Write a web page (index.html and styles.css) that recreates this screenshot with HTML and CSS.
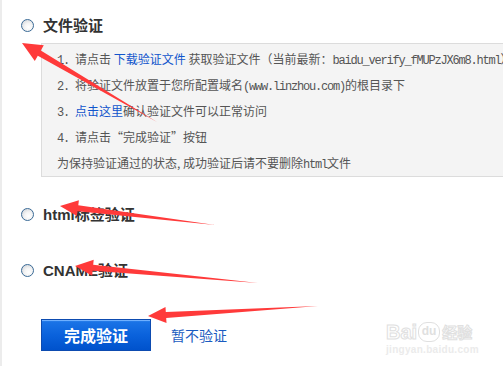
FILE: index.html
```html
<!DOCTYPE html>
<html lang="zh-CN">
<head>
<meta charset="utf-8">
<title>验证方式</title>
<link rel="stylesheet" href="styles.css">
</head>
<body>
<div class="page">
  <div class="option first">
    <span class="radio"></span>
    <span class="label">文件验证</span>
  </div>
  <div class="box">
    <p class="line"><span class="mono">1. </span>请点击 <a class="link">下载验证文件</a> 获取验证文件（当前最新：<span class="mono">baidu_verify_fMUPzJX6m8.html</span>）</p>
    <p class="line"><span class="mono">2. </span>将验证文件放置于您所配置域名<span class="mono">(www.linzhou.com)</span>的根目录下</p>
    <p class="line"><span class="mono">3. </span><a class="link">点击这里</a>确认验证文件可以正常访问</p>
    <p class="line"><span class="mono">4. </span>请点击<span class="q">“</span>完成验证<span class="q">”</span>按钮</p>
    <p class="line">为保持验证通过的状态, 成功验证后请不要删除<span class="mono">html</span>文件</p>
  </div>
  <div class="option second">
    <span class="radio"></span>
    <span class="label"><span class="latin">html</span>标签验证</span>
  </div>
  <div class="option third">
    <span class="radio"></span>
    <span class="label"><span class="latin">CNAME</span>验证</span>
  </div>
  <div class="actions">
    <button class="btn">完成验证</button>
    <a class="skip">暂不验证</a>
  </div>
</div>

<div class="watermark">
  <div class="wm-top"><span class="wm-bai">Bai</span><span class="wm-du">du</span><span class="wm-cn">经验</span></div>
  <div class="wm-url">jingyan.baidu.com</div>
</div>

<svg class="arrows" width="503" height="366" viewBox="0 0 503 366">
  <polygon points="22,43 43.8,45.3 40.8,50.5 157,122 37.8,55.7 34.8,60.9"/>
  <polygon points="60,206 78.9,200.3 78.3,205.2 215,225 77.5,211.2 76.9,216.1"/>
  <polygon points="75,266 93.7,259.7 93.2,264.7 258,283 92.6,270.7 92.2,275.7"/>
  <polygon points="148,316 165.5,306.9 165.8,311.9 318,306 166.2,317.9 166.5,322.9"/>
</svg>
</body>
</html>
```
FILE: styles.css
```css
html, body {
  margin: 0;
  padding: 0;
  overflow: hidden;
  background: #fff;
}
body {
  width: 503px;
  height: 366px;
  border-left: 2px solid #ececec;
  box-sizing: border-box;
  font-family: "Noto Sans CJK SC", "Liberation Sans", sans-serif;
  color: #333;
  position: relative;
}
.page {
  padding: 15px 0 0 19px;
}
.option {
  display: flex;
  align-items: center;
  height: 20px;
}
.option.second { margin-top: 27px; }
.option.third { margin-top: 36px; }
.radio {
  width: 11px;
  height: 11px;
  border: 1px solid #3a6a96;
  border-radius: 50%;
  background: radial-gradient(circle at 60% 65%, #ffffff 0%, #f4f4f4 40%, #c8ccd2 100%);
  flex: none;
}
.label {
  margin-left: 9px;
  font-size: 15px;
  font-weight: bold;
  color: #333;
  line-height: 20px;
}
.latin {
  font-family: "Liberation Sans", sans-serif;
}
.box {
  margin: 8px -60px 0 20px;
  border: 1px solid #dcdcdc;
  background: #f4f4f4;
  padding: 2px 0 0 15px;
}
.line {
  margin: 0;
  height: 26px;
  font-size: 12px;
  line-height: 26px;
  color: #555;
  white-space: nowrap;
}
.mono {
  font-family: "Liberation Mono", monospace;
  letter-spacing: -1.2px;
  white-space: pre;
  line-height: 12px;
}
.q {
  display: inline-block;
  width: 12px;
  text-align: center;
  line-height: 12px;
}
.link {
  color: #1155cc;
  text-decoration: none;
}
.actions {
  display: flex;
  align-items: center;
  margin: 39px 0 0 20px;
}
.btn {
  width: 110px;
  height: 32px;
  border: 1px solid #0d4bb0;
  background: linear-gradient(#3d8ff0 0px, #1a73e6 2px, #0a62dc 50%, #0052cc 100%);
  box-shadow: inset 0 1px 0 #6fb0ff;
  color: #fff;
  font-family: "Noto Sans CJK SC", sans-serif;
  font-size: 16px;
  font-weight: bold;
  padding: 0;
  line-height: 30px;
}
.skip {
  margin-left: 20px;
  font-size: 14px;
  color: #1a5bc0;
}
.watermark {
  position: absolute;
  left: 384px;
  top: 314px;
  color: #e6e6e6;
  font-family: "Liberation Sans", sans-serif;
}
.wm-top {
  display: flex;
  align-items: flex-end;
  height: 28px;
}
.wm-bai {
  font-size: 20px;
  font-weight: bold;
  color: #fff;
  -webkit-text-stroke: 1px #e0e0e0;
  line-height: 20px;
}
.wm-du {
  display: inline-block;
  margin-left: 1px;
  width: 20px;
  height: 18px;
  border: 1px solid #e0e0e0;
  border-radius: 9px;
  font-size: 12px;
  font-weight: bold;
  text-align: center;
  line-height: 17px;
  color: #e0e0e0;
}
.wm-cn {
  margin-left: 2px;
  font-family: "Noto Sans CJK SC", sans-serif;
  font-size: 15px;
  font-weight: bold;
  line-height: 20px;
  color: #fff;
  -webkit-text-stroke: 1px #e0e0e0;
}
.wm-url {
  font-size: 10px;
  font-weight: bold;
  color: #ebebeb;
  margin-top: 2px;
  letter-spacing: 0.3px;
}
.arrows {
  position: absolute;
  left: -2px;
  top: 0;
  pointer-events: none;
}
.arrows polygon {
  fill: #ff3a3a;
}
```
